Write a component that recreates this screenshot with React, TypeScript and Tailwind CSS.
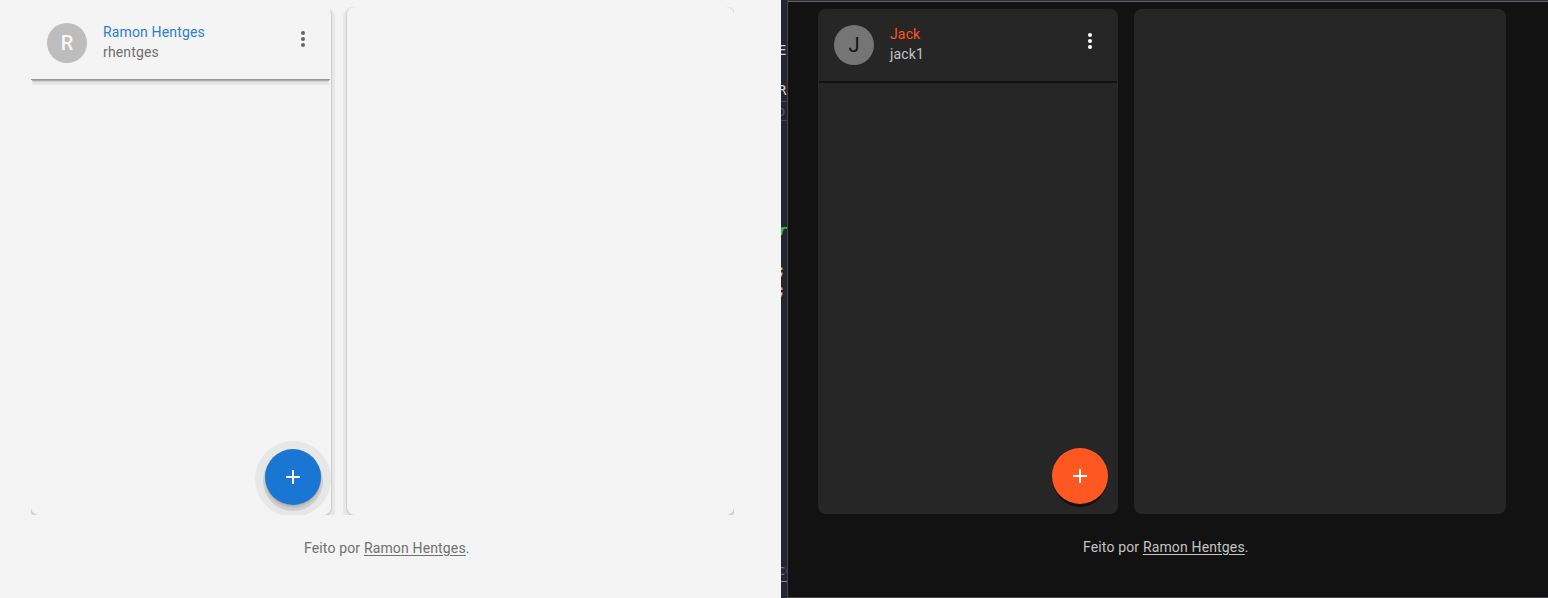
import React from 'react';

type PanelTheme = {
  region: string;
  card: string;
  side: string;
  header: string;
  avatar: string;
  name: string;
  user: string;
  dots: string;
  menu: string;
  fab: string;
};

const light: PanelTheme = {
  region: 'h-[508px] w-[703px]',
  card: 'rounded-lg bg-[#f4f4f4] shadow-[0_1px_0_1px_#cecece,0_3px_0_4px_#e7e7e7]',
  side: 'rounded-lg bg-[#f4f4f4] shadow-[0_1px_0_1px_#cecece,0_3px_0_4px_#e7e7e7]',
  header:
    'mr-px bg-[#f4f4f4] shadow-[0_1px_0_0_#989898,0_3px_0_-1px_#adadad,0_5px_0_-2px_#cecece,0_7px_0_-1px_#e7e7e7]',
  avatar: 'bg-[#bdbdbd] text-[#f7f7f7] font-medium',
  name: 'text-[#2b7fd4]',
  user: 'text-[#707070]',
  dots: 'text-[#666666]',
  menu: 'mt-1 mr-[15px]',
  fab: 'mb-[10px] bg-[#1976d2] shadow-[0_1px_0_0_#aaaaaa,0_3px_1px_0_#bdbdbd,0_4px_0_2px_#cecece,0_2px_0_10px_#e7e7e7]',
};

const dark: PanelTheme = {
  region: 'h-[505px] w-[688px]',
  card: 'rounded-lg bg-[#262626]',
  side: 'rounded-lg bg-[#262626]',
  header: 'bg-[#262626] rounded-t-lg shadow-[0_3px_0_-1px_#121212]',
  avatar: 'bg-[#757575] text-[#121212]',
  name: 'text-[#ff5722]',
  user: 'text-[#c4c4c4]',
  dots: 'text-white',
  menu: 'mt-1 mr-4',
  fab: 'mb-[10px] bg-[#ff5722] shadow-[0_4px_0_-1px_#121212]',
};

function Workspace({ theme, name, user }: { theme: PanelTheme; name: string; user: string }) {
  return (
    <div className={`flex gap-4 overflow-hidden ${theme.region}`}>
      <section className={`flex w-[300px] shrink-0 flex-col justify-between ${theme.card}`}>
        <header className={`flex h-[72px] items-start ${theme.header}`}>
          <div
            className={`mt-4 ml-4 flex h-10 w-10 items-center justify-center rounded-full text-[20px] ${theme.avatar}`}
          >
            {name[0]}
          </div>
          <div className="mt-[15px] ml-4 flex-1 text-[14px] leading-5 tracking-[0.15px]">
            <div className={theme.name}>{name}</div>
            <div className={theme.user}>{user}</div>
          </div>
          <button className={`flex h-10 w-6 items-start justify-center pt-4 ${theme.menu} ${theme.dots}`}>
            <svg viewBox="0 0 24 24" className="h-6 w-6 shrink-0 fill-current">
              <circle cx="12" cy="6" r="2" />
              <circle cx="12" cy="12" r="2" />
              <circle cx="12" cy="18" r="2" />
            </svg>
          </button>
        </header>
        <button
          className={`mr-[10px] flex h-14 w-14 items-center justify-center self-end rounded-full text-white ${theme.fab}`}
        >
          <svg viewBox="0 0 24 24" className="h-6 w-6 fill-current">
            <path d="M19 13h-6v6h-2v-6H5v-2h6V5h2v6h6v2z" />
          </svg>
        </button>
      </section>
      <section className={`flex-1 ${theme.side}`} />
    </div>
  );
}

function Credit({ className }: { className: string }) {
  return (
    <p className={`text-[14px] leading-5 tracking-[0.15px] ${className}`}>
      Feito por <a className="underline underline-offset-2">Ramon Hentges</a>.
    </p>
  );
}

function EditorStrip() {
  return (
    <div className="h-full w-[7px] shrink-0 overflow-hidden border-r border-[#444448] bg-[#24262f] font-['DejaVu_Sans_Mono'] text-[14px] leading-5 whitespace-pre">
      <div className="mt-10 -ml-[3px] h-10 w-5 text-[#d8d3cc]">EN</div>
      <div className="-ml-[3px] h-5 w-5 text-[#d8d3cc]">RE</div>
      <div className="mt-px h-5 w-4 border-y border-[#45464f] leading-[18px] text-[#47549b]">
        <span className="-ml-[4px]">o</span>
      </div>
      <div className="mt-[99px] -ml-[2px] h-10 w-4 font-bold text-[#2fc44e] italic">r</div>
      <div className="-ml-[4px] h-5 w-4 font-bold text-[#d4b896]">;</div>
      <div className="-ml-[4px] h-5 w-4 font-bold text-[#d4b896]">;</div>
      <div className="mt-[260px] h-[22px] w-5 border-b border-[#a778c8] text-[#9464b8]">
        <span className="-ml-[4px]">c</span>
        <span className="text-[#4549c8]">o</span>
      </div>
    </div>
  );
}

export default function App() {
  return (
    <main className="flex h-[598px] w-[1548px] overflow-hidden bg-[#121212] font-['Roboto',sans-serif]">
      <div className="h-full w-[781px] shrink-0 bg-[#f4f4f4] pt-[7px] pl-[31px]">
        <Workspace theme={light} name="Ramon Hentges" user="rhentges" />
        <Credit className="mt-[23px] pl-[273px] text-[#707070]" />
      </div>
      <div className="flex h-full flex-1 flex-col">
        <div className="h-0.5 shrink-0 border-b border-[#626268] bg-[#303036]" />
        <div className="flex min-h-0 flex-1">
          <div className="-mt-0.5 h-[598px]">
            <EditorStrip />
          </div>
          <div className="flex-1 border-b border-[#48484a] pt-[7px] pl-[30px]">
            <Workspace theme={dark} name="Jack" user="jack1" />
            <Credit className="mt-[23px] pl-[265px] text-[#c4c4c4]" />
          </div>
        </div>
      </div>
    </main>
  );
}
